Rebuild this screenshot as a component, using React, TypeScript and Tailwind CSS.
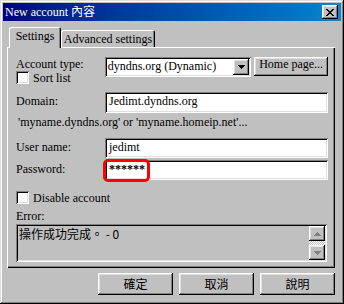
import React from 'react';

const frame =
  'shadow-[inset_-1px_-1px_#000,inset_1px_1px_#dfdfdf,inset_-2px_-2px_#808080,inset_2px_2px_#fff]';
const raised =
  'shadow-[inset_-1px_-1px_#000,inset_1px_1px_#fff,inset_-2px_-2px_#808080,inset_2px_2px_#dfdfdf]';
const sunken =
  'shadow-[inset_1px_1px_#808080,inset_-1px_-1px_#fff,inset_2px_2px_#000,inset_-2px_-2px_#dfdfdf]';

const X_ROWS: [number, number][][] = [
  [[0, 2], [6, 2]],
  [[1, 2], [5, 2]],
  [[2, 4]],
  [[3, 2]],
  [[2, 4]],
  [[1, 2], [5, 2]],
  [[0, 2], [6, 2]],
];

function CloseGlyph() {
  return (
    <svg width="8" height="7" viewBox="0 0 8 7" shapeRendering="crispEdges">
      {X_ROWS.map((row, y) =>
        row.map(([x, w]) => <rect key={`${y}-${x}`} x={x} y={y} width={w} height={1} fill="#000" />),
      )}
    </svg>
  );
}

function Arrow({ dir, color }: { dir: 'up' | 'down'; color: string }) {
  const d = dir === 'down' ? 'M0 0h7v1H6v1H5v1H4v1H3V3H2V2H1V1H0z' : 'M3 0h1v1h1v1h1v1h1v1H0V3h1V2h1V1h1z';
  return (
    <svg width="7" height="4" viewBox="0 0 7 4" shapeRendering="crispEdges">
      <path d={d} fill={color} />
    </svg>
  );
}

function Check() {
  return <span className={`block w-[13px] h-[13px] shrink-0 bg-white ${sunken}`} />;
}

function Field({ children, h = 'h-[20px]' }: { children?: React.ReactNode; h?: string }) {
  return (
    <div className={`${h} w-[223px] bg-white ${sunken} pl-[4px] pt-[3px] text-black whitespace-nowrap`}>
      {children}
    </div>
  );
}

function DialogButton({ label }: { label: string }) {
  return (
    <div
      className={`w-[75px] h-[22px] flex items-center justify-center bg-[#c0c0c0] ${raised} font-['Noto_Sans_CJK_TC',sans-serif] text-[12px] leading-[14px]`}
    >
      {label}
    </div>
  );
}

export default function App() {
  return (
    <div
      className={`w-[344px] h-[304px] bg-[#c0c0c0] p-[3px] flex flex-col ${frame} font-['Liberation_Serif','Noto_Sans_CJK_TC',serif] text-[12px] leading-[12px] text-black`}
    >
      {/* title bar */}
      <div className="h-[18px] shrink-0 flex items-center pl-[2px] pr-[3px] bg-linear-to-r from-[#000080] to-[#1084d0]">
        <span className="text-white whitespace-nowrap">New account 內容</span>
        <div className={`ml-auto w-[16px] h-[14px] flex items-center justify-center bg-[#c0c0c0] ${raised}`}>
          <CloseGlyph />
        </div>
      </div>

      <div className="flex flex-col pl-[4px] pr-[6px] pt-[6px]">
        {/* tabs */}
        <div className="flex items-end h-[20px] pl-[2px] relative z-10">
          <div className="h-[21px] -mb-px w-[52px] flex justify-center pt-[3px] bg-[#c0c0c0] rounded-t-[2px] shadow-[inset_1px_1px_#fff,inset_-1px_0_#000,inset_-2px_0_#808080]">
            Settings
          </div>
          <div className="h-[17px] w-[94px] flex justify-center pt-[3px] bg-[#c0c0c0] rounded-t-[2px] shadow-[inset_1px_1px_#fff,inset_-1px_0_#000,inset_-2px_0_#808080] whitespace-nowrap">
            Advanced settings
          </div>
        </div>

        {/* tab page */}
        <div className="h-[221px] flex flex-col pl-[9px] pr-[7px] pt-[10px] shadow-[inset_1px_1px_#fff,inset_-1px_-1px_#000,inset_-2px_-2px_#808080]">
          <div className="flex">
            <div className="w-[89px] flex flex-col">
              <div className="mt-[1px] whitespace-nowrap">Account type:</div>
              <div className="mt-[1px] h-[13px] flex items-center gap-[4px]">
                <Check />
                <span>Sort list</span>
              </div>
            </div>
            <div className={`h-[20px] w-[147px] flex bg-white ${sunken} p-[2px]`}>
              <span className="flex-1 pl-[1px] pt-[1px] whitespace-nowrap">dyndns.org (Dynamic)</span>
              <div className={`w-[16px] h-[16px] flex items-center justify-center bg-[#c0c0c0] ${raised}`}>
                <Arrow dir="down" color="#000" />
              </div>
            </div>
            <div
              className={`ml-[3px] w-[74px] h-[19px] flex justify-center pt-[1px] bg-[#c0c0c0] ${raised} whitespace-nowrap`}
            >
              Home page...
            </div>
          </div>

          <div className="mt-[8px] flex">
            <div className="w-[89px] pt-[3px]">Domain:</div>
            <Field h="h-[21px]">Jedimt.dyndns.org</Field>
          </div>

          <div className="mt-[3px] pl-[2px] whitespace-nowrap">
            'myname.dyndns.org' or 'myname.homeip.net'...
          </div>

          <div className="mt-[10px] flex">
            <div className="w-[89px] pt-[3px]">User name:</div>
            <Field>jedimt</Field>
          </div>
          <div className="mt-[2px] flex">
            <div className="w-[89px] pt-[3px]">Password:</div>
            <div className="relative">
              <Field>
                <span className="font-bold text-black">******</span>
              </Field>
              <div className="absolute left-[-2px] top-[-1px] w-[47px] h-[23px] border-[3px] border-[#ff0000] rounded-[5px]" />
            </div>
          </div>

          <div className="mt-[11px] h-[13px] flex items-center gap-[4px]">
            <Check />
            <span>Disable account</span>
          </div>

          <div className="mt-[6px]">Error:</div>
          <div className={`mt-[2px] w-[311px] h-[38px] flex p-[2px] ${sunken}`}>
            <div className="flex-1 pl-[1px] pt-[1px] font-['Noto_Sans_CJK_TC',sans-serif] text-[12px] leading-[14px] whitespace-nowrap">
              操作成功完成。 - 0
            </div>
            <div className="w-[16px] flex flex-col">
              <div className={`h-[15px] flex items-center justify-center bg-[#c0c0c0] ${raised}`}>
                <Arrow dir="up" color="#808080" />
              </div>
              <div className="flex-1 bg-[repeating-conic-gradient(#fff_0_25%,#c0c0c0_0_50%)] bg-[length:2px_2px]" />
              <div className={`h-[15px] flex items-center justify-center bg-[#c0c0c0] ${raised}`}>
                <Arrow dir="down" color="#808080" />
              </div>
            </div>
          </div>
        </div>

        {/* buttons */}
        <div className="mt-[5px] flex justify-end gap-[6px]">
          <DialogButton label="確定" />
          <DialogButton label="取消" />
          <DialogButton label="說明" />
        </div>
      </div>
    </div>
  );
}
